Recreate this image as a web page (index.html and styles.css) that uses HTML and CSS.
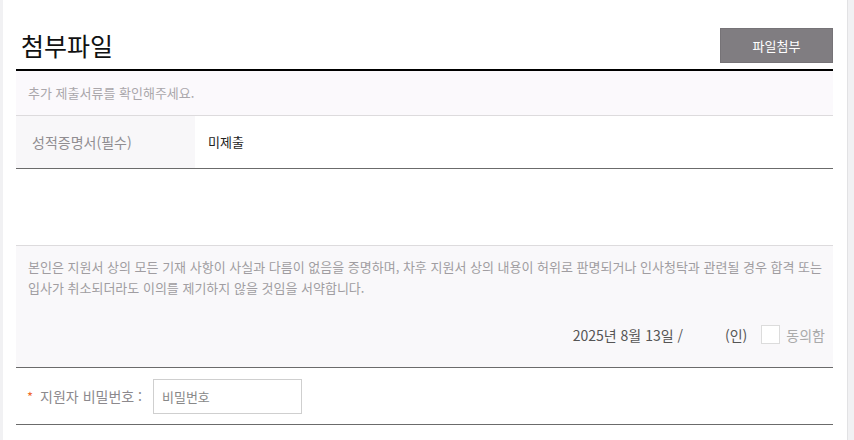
FILE: index.html
```html
<!DOCTYPE html>
<html lang="ko">
<head>
<meta charset="utf-8">
<title>첨부파일</title>
<link rel="stylesheet" href="styles.css">
</head>
<body>
<div class="page">
  <div class="header">
    <h2 class="title">첨부파일</h2>
    <button class="btn-attach" type="button">파일첨부</button>
  </div>
  <div class="info">추가 제출서류를 확인해주세요.</div>
  <div class="doc-row">
    <div class="doc-label">성적증명서(필수)</div>
    <div class="doc-value">미제출</div>
  </div>
  <div class="empty"></div>
  <div class="agree">
    <p class="agree-text">본인은 지원서 상의 모든 기재 사항이 사실과 다름이 없음을 증명하며, 차후 지원서 상의 내용이 허위로 판명되거나 인사청탁과 관련될 경우 합격 또는 입사가 취소되더라도 이의를 제기하지 않을 것임을 서약합니다.</p>
    <div class="agree-sign">
      <span class="date">2025년 8월 13일 /</span>
      <span class="seal">(인)</span>
      <label class="check"><span class="box"></span><span class="check-text">동의함</span></label>
    </div>
  </div>
  <div class="pw-row">
    <span class="star">*</span>
    <span class="pw-label">지원자 비밀번호 :</span>
    <input class="pw-input" type="password" placeholder="비밀번호">
  </div>
</div>
</body>
</html>
```

FILE: styles.css
```css
html, body {
  margin: 0;
  padding: 0;
}
body {
  background: #f1f1f3;
  font-family: "Noto Sans CJK KR", "Noto Sans", sans-serif;
  height: 440px;
  overflow: hidden;
}
.page {
  margin-left: 3px;
  width: 817px;
  padding: 0 14px 0 13px;
  background: #fff;
  height: 440px;
  border-right: 1px solid #e2e2e4;
}
.header {
  display: flex;
  justify-content: space-between;
  align-items: center;
  padding-top: 28px;
  height: 35px;
  padding-bottom: 6px;
  border-bottom: 2px solid #000;
}
.title {
  margin: 0 0 0 5px;
  font-size: 25px;
  font-weight: 400;
  line-height: 35px;
  color: #111;
}
.btn-attach {
  width: 113px;
  height: 35px;
  background: #807d81;
  border: 1px solid #767377;
  color: #fff;
  font-family: inherit;
  font-size: 13px;
  padding: 0;
  margin-right: 0;
}
.info {
  height: 44px;
  line-height: 44px;
  background: #fbf9fc;
  border-bottom: 1px solid #dddbdd;
  padding-left: 12px;
  font-size: 13px;
  color: #aaa7ab;
}
.doc-row {
  display: flex;
  height: 52px;
  border-bottom: 1px solid #6b6b6b;
}
.doc-label {
  width: 163px;
  padding-left: 16px;
  background: #f8f7f9;
  line-height: 52px;
  font-size: 14px;
  color: #908d91;
}
.doc-value {
  padding-left: 13px;
  line-height: 52px;
  font-size: 13px;
  color: #222;
}
.empty {
  height: 76px;
  border-bottom: 1px solid #dddbdd;
}
.agree {
  height: 122px;
  box-sizing: border-box;
  background: #f9f8fa;
  border-bottom: 1px solid #6b6b6b;
  padding: 10px 8px 0 12px;
}
.agree-text {
  margin: 0;
  font-size: 13px;
  line-height: 21px;
  color: #a09da1;
}
.agree-sign {
  display: flex;
  justify-content: flex-end;
  align-items: center;
  margin-top: 26px;
  height: 21px;
  font-size: 14px;
  color: #555;
}
.date {
  margin-right: 42px;
}
.seal {
  margin-right: 14px;
}
.check {
  display: flex;
  align-items: center;
}
.box {
  width: 17px;
  height: 17px;
  border: 1px solid #dcdcdc;
  background: #fff;
  margin-right: 6px;
}
.check-text {
  color: #aaa;
}
.pw-row {
  display: flex;
  align-items: center;
  height: 56px;
  border-bottom: 1px solid #6b6b6b;
  padding-left: 11px;
  font-size: 14px;
}
.star {
  color: #ef6a2e;
  margin-right: 7px;
  font-size: 13px;
}
.pw-label {
  color: #8c898d;
  margin-right: 11px;
}
.pw-input {
  width: 149px;
  height: 35px;
  box-sizing: border-box;
  border: 1px solid #cfcfcf;
  padding: 0 0 0 8px;
  font-family: inherit;
  font-size: 13px;
  background: #fff;
  outline: none;
}
.pw-input::placeholder {
  color: #888;
}
```
